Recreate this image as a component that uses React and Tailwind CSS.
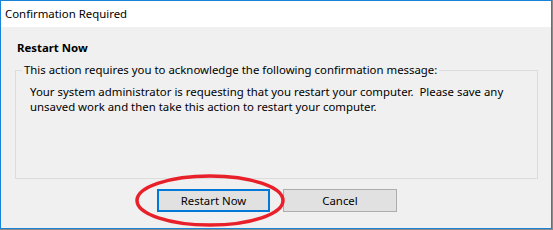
export default function App() {
  const font = { fontFamily: '"Noto Sans", "Open Sans", sans-serif' };
  return (
    <div className="w-[553px] h-[230px] bg-[#8a8a8a] relative" style={font}>
      <div className="w-[552px] h-[229px] border border-[#1883d7] bg-[#f0f0f0] flex flex-col">
        <div className="h-[26px] bg-white flex items-center pl-[4px] text-[11.4px] text-black shrink-0">
          Confirmation Required
        </div>
        <div className="flex flex-col px-[14px]">
          <div className="mt-[13px] ml-[2px] text-[11.4px] font-bold leading-[16px] text-black">Restart Now</div>
          <fieldset className="mt-[6px] h-[117px] border border-[#dcdcdc] pl-[14px] pr-2 m-0 w-[523px]">
            <legend className="ml-[-8px] px-[2px] text-[11.4px] leading-[16px] text-black">
              This action requires you to acknowledge the following confirmation message:
            </legend>
            <p className="mt-[6px] text-[11.4px] leading-[15px] text-black whitespace-pre">
              {"Your system administrator is requesting that you restart your computer.  Please save any\nunsaved work and then take this action to restart your computer."}
            </p>
          </fieldset>
          <div className="flex gap-[13px] mt-[10px] ml-[142px]">
            <button className="w-[113px] h-[23px] border-2 border-[#0078d7] bg-[#e1e1e1] text-[11.4px] text-black flex items-center justify-center">
              Restart Now
            </button>
            <button className="w-[114px] h-[23px] border border-[#adadad] bg-[#e1e1e1] text-[11.4px] text-black flex items-center justify-center">
              Cancel
            </button>
          </div>
        </div>
      </div>
      <svg className="absolute left-[134px] top-[174px]" width="152" height="53" viewBox="0 0 152 53">
        <ellipse cx="76" cy="26.5" rx="73" ry="24.5" fill="none" stroke="#e8202a" strokeWidth="3.5" />
      </svg>
    </div>
  );
}
